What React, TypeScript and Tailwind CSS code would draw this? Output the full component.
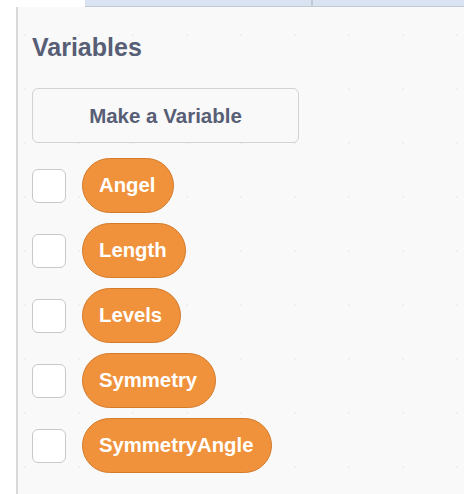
import React from "react";

const vars = ["Angel", "Length", "Levels", "Symmetry", "SymmetryAngle"];

export default function App() {
  return (
    <div className="w-[464px] h-[494px] overflow-hidden flex flex-col bg-white font-['Liberation_Sans',Arial,sans-serif]">
      <div className="flex h-[7px] shrink-0">
        <div className="w-[85px] bg-white" />
        <div className="flex flex-1 bg-[#d9e3f2] border-b border-[#c3cad6]">
          <div className="w-[228px] border-r-2 border-[#c3cad6]" />
          <div className="flex-1" />
        </div>
      </div>
      <div className="flex flex-1 min-h-0">
        <div className="w-[16px] bg-white" />
        <div className="w-[2px] bg-[#d9d9d9]" />
        <div className="flex-1 bg-[#f9f9f9] pl-[14px] pt-[26px] [background-image:radial-gradient(circle,#efefef_1px,transparent_1.5px)] [background-size:54px_54px] [background-position:-20px_1px]">
          <div className="text-[25px] leading-[28px] font-bold text-[#575e75]">Variables</div>
          <div className="mt-[27px] w-[267px] h-[55px] rounded-[6px] border border-[#d3d3d3] bg-[#f9f9f9] flex items-center justify-center pt-[2px] text-[20.5px] font-bold text-[#575e75]">
            Make a Variable
          </div>
          <div className="mt-[15px] flex flex-col gap-[10px]">
            {vars.map((v) => (
              <div key={v} className="flex items-center gap-[16px] h-[55px]">
                <div className="w-[34px] h-[34px] rounded-[6px] border border-[#c9c9c9] bg-white" />
                <div className="h-[55px] rounded-full bg-[#f0923b] border border-[#d47a2b] pl-[16px] pr-[18px] flex items-center text-[20.3px] font-bold text-white">
                  {v}
                </div>
              </div>
            ))}
          </div>
        </div>
      </div>
    </div>
  );
}
